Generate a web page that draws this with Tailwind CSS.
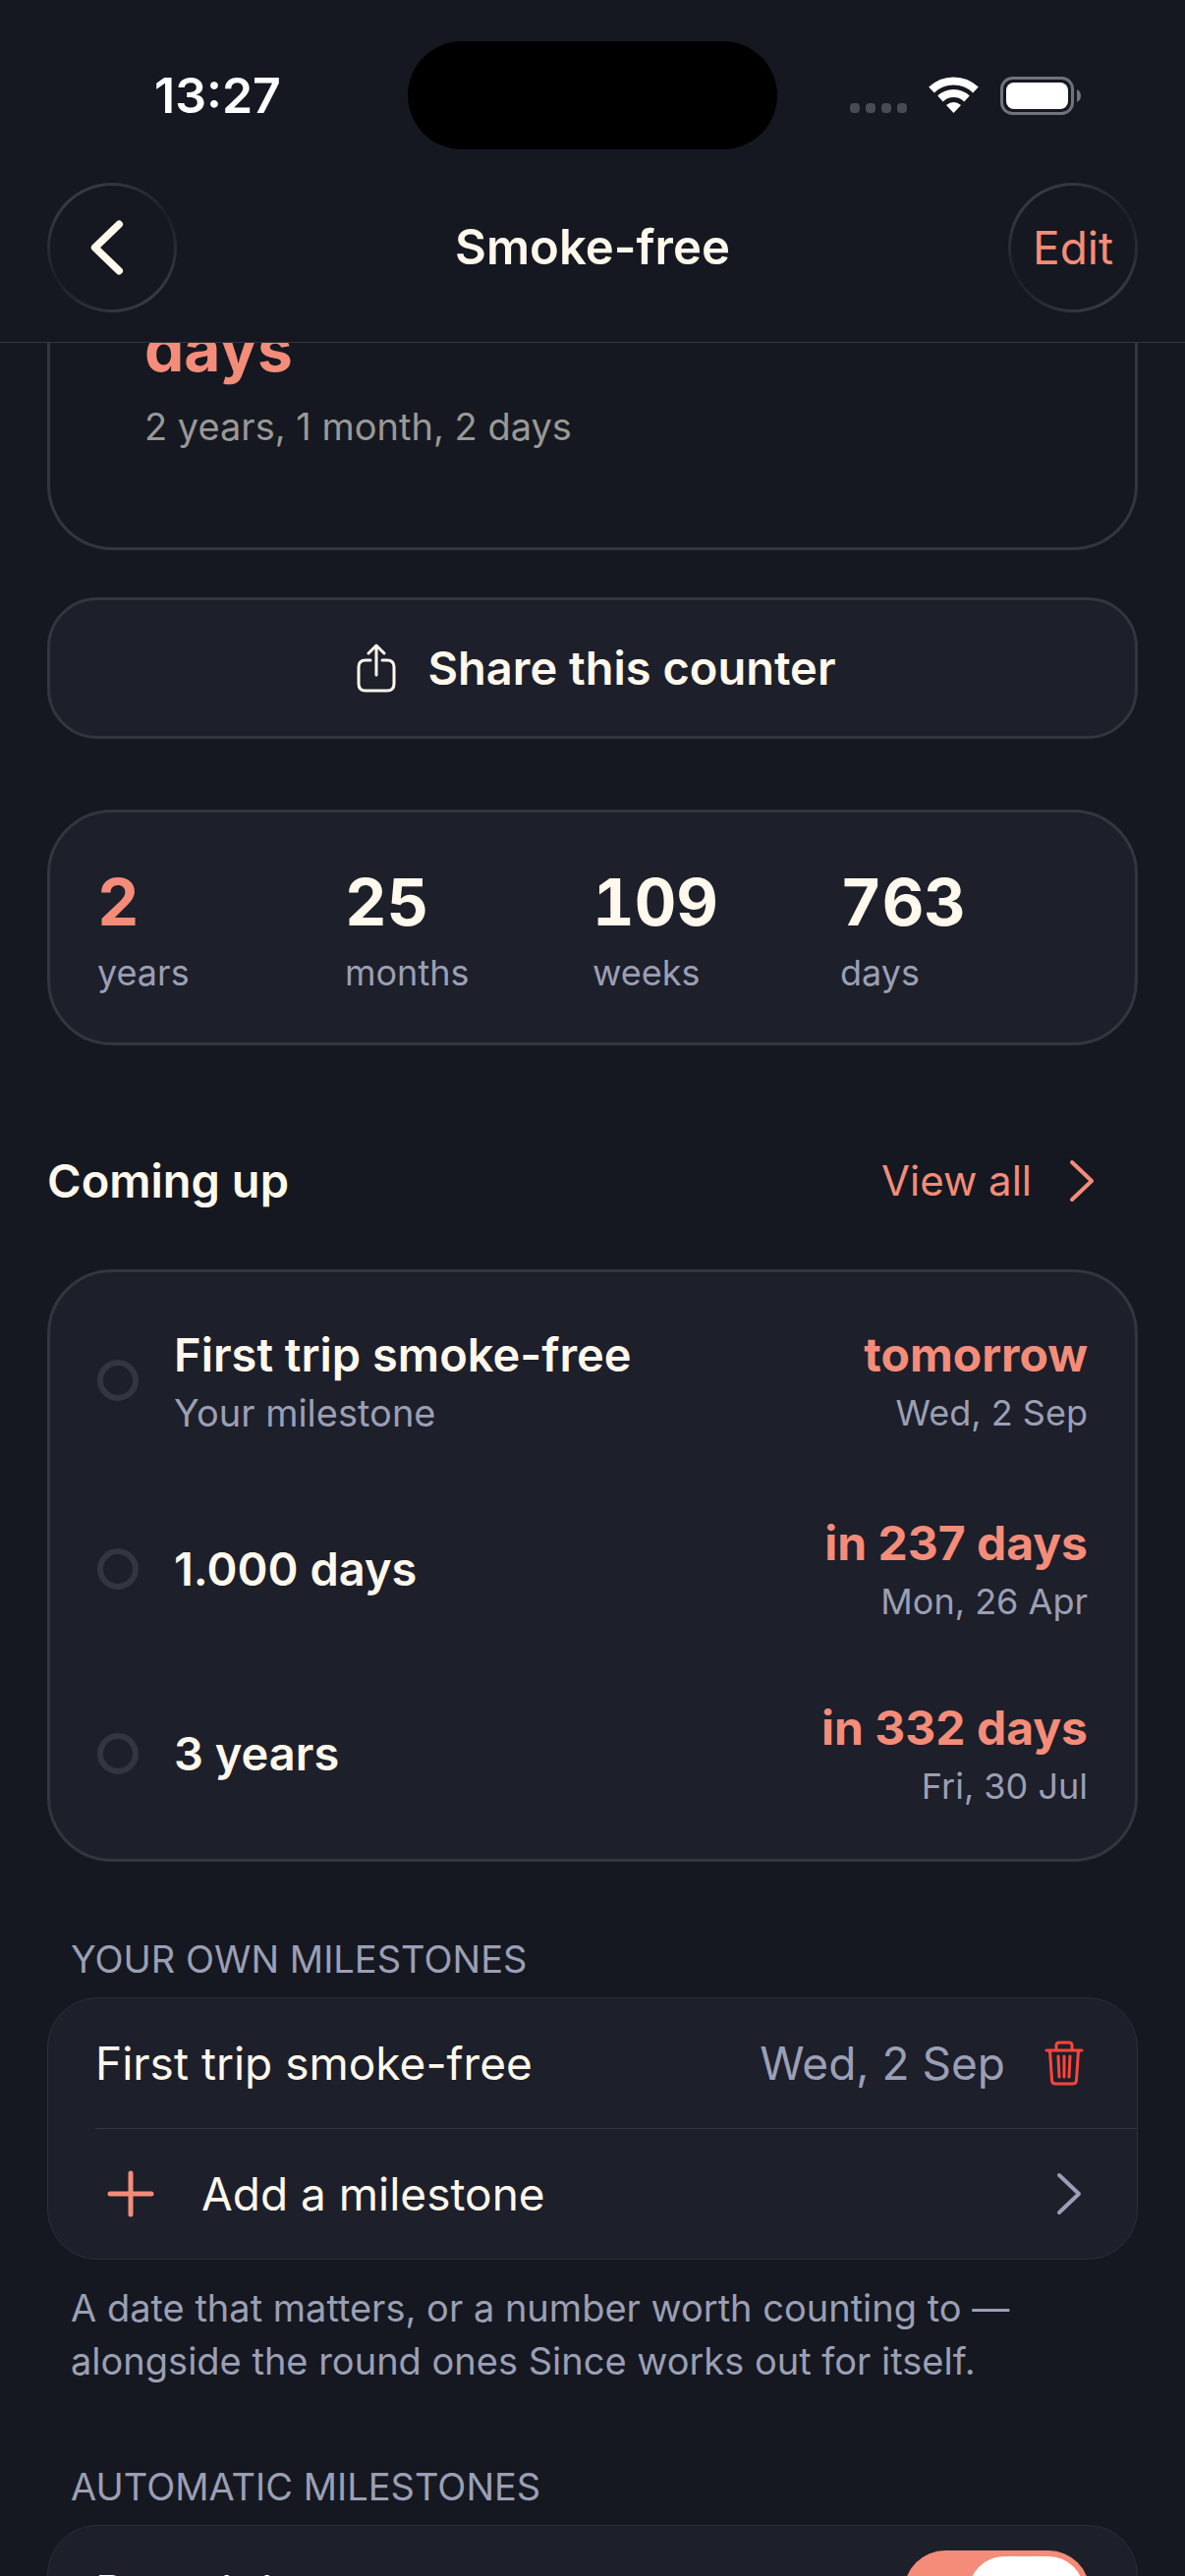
<!DOCTYPE html>
<html lang="en">
<head>
    <meta charset="UTF-8">
    <meta name="viewport" content="width=device-width, initial-scale=1.0">
    <script src="https://cdn.jsdelivr.net/npm/@tailwindcss/browser@4"></script>
    <title>Since | Smoke-free</title>
</head>
<body class="flex flex-col h-screen overflow-hidden bg-[#151820] text-[#fff8ec] font-['Inter','Liberation_Sans',sans-serif] text-[46px] leading-[60px]">
    <!-- status bar -->
    <div class="grid grid-cols-3 items-center h-[186px] pt-2 text-white shrink-0">
        <div class="pl-[157px] text-[50px] font-semibold">13:27</div>
        <div class="justify-self-center w-[376px] h-[110px] rounded-full bg-black"></div>
        <div class="flex items-center justify-end gap-[22px] pr-[106px]">
            <svg class="w-[58px] h-[38px]" viewBox="0 0 58 38" fill="#494b53"><rect x="0" y="27" width="10" height="10" rx="4"/><rect x="16" y="27" width="10" height="10" rx="4"/><rect x="32" y="27" width="10" height="10" rx="4"/><rect x="48" y="27" width="10" height="10" rx="4"/></svg>
            <svg class="w-[51px] h-[38px]" viewBox="0 0 51 38" fill="none" stroke="#fff"><path d="M3 13.500a32.500 32.500 0 0 1 45 0" stroke-width="8"/><path d="M12 22.500a19.500 19.500 0 0 1 27 0" stroke-width="8"/><path d="M25.500 37l-7.500-8q7.500-6 15 0z" fill="#fff" stroke="none"/></svg>
            <svg class="w-[82px] h-[39px]" viewBox="0 0 82 39"><rect x="1.500" y="1.500" width="72" height="36" rx="11" fill="none" stroke="#70727d" stroke-width="3"/><rect x="6" y="6" width="63" height="27" rx="8" fill="#fff"/><path d="M78 13q4 2 4 6.500t-4 6.500z" fill="#70727d"/></svg>
        </div>
    </div>

    <!-- nav bar -->
    <header class="grid grid-cols-[132px_1fr_132px] items-center h-[163px] pb-[30px] px-12 shrink-0 border-b border-[#33353f]">
        <button aria-label="Back" class="size-[132px] rounded-full p-[3px] bg-linear-150 from-[#42444e] via-[#1b1d27] to-[#42444e]">
            <span class="flex items-center justify-center size-full rounded-full bg-[#151820]">
                <svg class="w-[36px] h-[60px] mr-3" viewBox="0 0 38 60" fill="none" stroke="#fff8ec" stroke-width="8" stroke-linecap="round" stroke-linejoin="round"><path d="M33 5L7 30l26 25"/></svg>
            </span>
        </button>
        <h1 class="text-center text-[49px] font-semibold">Smoke-free</h1>
        <button class="size-[132px] rounded-full p-[3px] bg-linear-150 from-[#42444e] via-[#1b1d27] to-[#42444e] text-[#f48c79]">
            <span class="flex items-center justify-center size-full rounded-full bg-[#151820]">Edit</span>
        </button>
    </header>

    <main class="flex-1 min-h-0 overflow-hidden px-12">
        <!-- counter card, scrolled under the nav bar -->
        <section class="-mt-[34px] h-[245px] pl-24 rounded-b-[66px] border-3 border-t-0 border-[#33353f]">
            <div class="text-[64px] leading-[80px] font-bold text-[#f48c79]">days</div>
            <p class="mt-[14px] text-[38px] leading-[50px] text-[#9a9896]">2 years, 1 month, 2 days</p>
        </section>

        <button class="mt-12 flex items-center justify-center gap-8 w-full h-36 pl-2 rounded-[51px] border-3 border-[#33353f] bg-[#1d1f2a] text-[47px] font-semibold">
            <svg class="w-[40px] h-[50px]" viewBox="0 0 40 50" fill="none" stroke="#fff8ec" stroke-width="3" stroke-linecap="round" stroke-linejoin="round"><path d="M14 17H9q-7 0-7 7v17q0 7 7 7h22q7 0 7-7V24q0-7-7-7h-5M20 32V3M12 10l8-8 8 8"/></svg>
            Share this counter
        </button>

        <section class="mt-18 grid grid-cols-4 h-60 px-12 pt-[51px] rounded-[66px] border-3 border-[#33353f] bg-[#1d1f2a]">
            <div>
                <div class="text-[66px] leading-[80px] font-bold tabular-nums text-[#f48c79]">2</div>
                <div class="text-[36px] leading-[48px] mt-2 text-[#9b9fb5]">years</div>
            </div>
            <div>
                <div class="text-[66px] leading-[80px] font-bold tabular-nums">25</div>
                <div class="text-[36px] leading-[48px] mt-2 text-[#9b9fb5]">months</div>
            </div>
            <div>
                <div class="text-[66px] leading-[80px] font-bold tabular-nums">109</div>
                <div class="text-[36px] leading-[48px] mt-2 text-[#9b9fb5]">weeks</div>
            </div>
            <div>
                <div class="text-[66px] leading-[80px] font-bold tabular-nums">763</div>
                <div class="text-[36px] leading-[48px] mt-2 text-[#9b9fb5]">days</div>
            </div>
        </section>

        <div class="flex items-center justify-between mt-[72px] h-[132px] pr-[42px]">
            <h2 class="text-[47px] font-semibold">Coming up</h2>
            <a href="#" class="flex items-center gap-9 text-[42px] text-[#f48c79]">
                View all
                <svg class="w-[30px] h-[44px]" viewBox="0 0 30 44" fill="none" stroke="#f48c79" stroke-width="4" stroke-linecap="round" stroke-linejoin="round"><path d="M5 3l20 19L5 41"/></svg>
            </a>
        </div>

        <ul class="mt-6 h-[603px] px-12 pt-12 rounded-[66px] border-3 border-[#33353f] bg-[#1d1f2a]">
            <li class="flex items-center h-[123px]">
                <span class="size-[42px] rounded-full border-6 border-[#33353f]"></span>
                <div class="ml-9 flex-1">
                    <div class="text-[47px] leading-[62px] font-semibold">First trip smoke-free</div>
                    <div class="mt-1 text-[38px] leading-[48px] text-[#9b9fb5]">Your milestone</div>
                </div>
                <div class="text-right">
                    <div class="text-[48px] leading-[62px] font-bold text-[#f48c79]">tomorrow</div>
                    <div class="mt-1 text-[36px] leading-[48px] text-[#9b9fb5]">Wed, 2 Sep</div>
                </div>
            </li>
            <li class="flex items-center h-[114px] mt-[74px]">
                <span class="size-[42px] rounded-full border-6 border-[#33353f]"></span>
                <div class="ml-9 flex-1 text-[47px] font-semibold">1.000 days</div>
                <div class="text-right">
                    <div class="text-[48px] leading-[62px] font-bold text-[#f48c79]">in 237 days</div>
                    <div class="mt-1 text-[36px] leading-[48px] text-[#9b9fb5]">Mon, 26 Apr</div>
                </div>
            </li>
            <li class="flex items-center h-[114px] mt-[74px]">
                <span class="size-[42px] rounded-full border-6 border-[#33353f]"></span>
                <div class="ml-9 flex-1 text-[47px] font-semibold">3 years</div>
                <div class="text-right">
                    <div class="text-[48px] leading-[62px] font-bold text-[#f48c79]">in 332 days</div>
                    <div class="mt-1 text-[36px] leading-[48px] text-[#9b9fb5]">Fri, 30 Jul</div>
                </div>
            </li>
        </ul>

        <h3 class="mt-[72px] px-6 text-[38px] leading-[54px] uppercase text-[#9b9fb5]">Your own milestones</h3>
        <section class="mt-3 pl-12 rounded-[51px] border border-[#2c2e39] bg-[#1d1f2a]">
            <div class="flex items-center h-[133px] pr-[54px] border-b border-[#33353f]">
                <span class="flex-1">First trip smoke-free</span>
                <span class="text-[#9b9fb5]">Wed, 2 Sep</span>
                <button aria-label="Delete milestone" class="ml-10">
                    <svg class="w-[40px] h-[46px]" viewBox="0 0 40 46" fill="none" stroke="#ff453a" stroke-width="3" stroke-linecap="round" stroke-linejoin="round"><path d="M2 10h36M12 10V5q0-3 3-3h10q3 0 3 3v5M5.500 10l2 30q0 4 4 4h17q4 0 4-4l2-30"/><path d="M14 16l1 21M20 16v21M26 16l-1 21" stroke-width="3"/></svg>
                </button>
            </div>
            <button class="flex items-center w-full h-[132px] pr-[54px] text-left">
                <svg class="w-[48px] h-[48px] ml-3" viewBox="0 0 48 48" fill="none" stroke="#f48c79" stroke-width="5" stroke-linecap="round"><path d="M24 3v42M3 24h42"/></svg>
                <span class="flex-1 ml-12">Add a milestone</span>
                <svg class="w-[30px] h-[44px]" viewBox="0 0 30 44" fill="none" stroke="#9b9fb5" stroke-width="4" stroke-linecap="round" stroke-linejoin="round"><path d="M5 3l20 19L5 41"/></svg>
            </button>
        </section>
        <p class="mt-[22px] px-6 text-[38px] leading-[54px] text-[#9b9fb5]">A date that matters, or a number worth counting to —<br>alongside the round ones Since works out for itself.</p>

        <h3 class="mt-[74px] px-6 text-[38px] leading-[54px] uppercase text-[#9b9fb5]">Automatic milestones</h3>
        <section class="mt-3 pl-12 rounded-t-[51px] border border-[#2c2e39] bg-[#1d1f2a]">
            <div class="flex items-center justify-between h-[133px] pr-12">
                <label for="round-days">Round day counts</label>
                <input id="round-days" type="checkbox" checked class="appearance-none flex w-[189px] h-[84px] p-[6px] rounded-full bg-[#3a3c47] checked:justify-end checked:bg-[#f48c79] before:w-[117px] before:h-[72px] before:rounded-full before:bg-white">
            </div>
        </section>
    </main>
</body>
</html>
